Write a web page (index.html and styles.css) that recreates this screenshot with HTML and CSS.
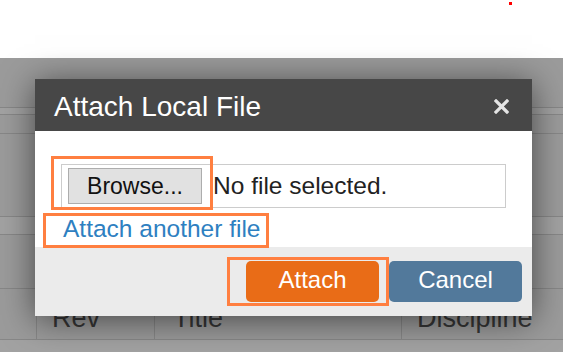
FILE: index.html
```html
<!DOCTYPE html>
<html lang="en">
<head>
    <meta charset="UTF-8">
    <meta name="viewport" content="width=device-width, initial-scale=1.0">
    <title>Attach Local File</title>
    <link rel="stylesheet" href="styles.css">
</head>
<body>
    <div class="topbar">
        <span class="status-dot"></span>
    </div>

    <div class="page">
        <div class="row row-tall"></div>
        <div class="row row-band row-thin"></div>
        <div class="row row-small"></div>
        <div class="row row-mid"></div>
        <div class="row row-band row-low"></div>
        <div class="row row-mid2"></div>
        <div class="row table-head">
            <div class="cell cell-check"></div>
            <div class="cell cell-rev">Rev</div>
            <div class="cell cell-title">Title</div>
            <div class="cell cell-disc">Discipline</div>
        </div>
        <div class="row row-band row-end"></div>
    </div>

    <div class="modal">
        <div class="modal-header">
            <h2>Attach Local File</h2>
            <button class="close" aria-label="Close">
                <svg width="15" height="15" viewBox="0 0 15 15">
                    <path d="M2 2 L13 13 M13 2 L2 13" stroke="#e4e4e4" stroke-width="3.2" stroke-linecap="square"/>
                </svg>
            </button>
        </div>
        <div class="modal-body">
            <div class="file-field">
                <span class="browse-btn">Browse...</span>
                <span class="file-name">No file selected.</span>
            </div>
            <a class="add-link" href="#">Attach another file</a>
        </div>
        <div class="modal-footer">
            <button class="btn btn-attach">Attach</button>
            <button class="btn btn-cancel">Cancel</button>
        </div>

        <span class="mark mark-browse"></span>
        <span class="mark mark-link"></span>
        <span class="mark mark-attach"></span>
    </div>
</body>
</html>
```

FILE: styles.css
```css
body {
    margin: 0;
    font-family: "Liberation Sans", Arial, sans-serif;
    background-color: #9b9b9b;
    overflow: hidden;
}
.topbar {
    height: 58px;
    background-color: #fff;
    position: relative;
}
.status-dot {
    position: absolute;
    left: 509px;
    top: 2px;
    width: 3px;
    height: 3px;
    background-color: #f00;
}
.page {
    background-color: #9b9b9b;
}
.row {
    border-bottom: 1px solid #878787;
    box-sizing: border-box;
}
.row-band {
    background-color: #a2a2a2;
}
.row-tall {
    height: 50px;
}
.row-thin {
    height: 7px;
}
.row-small {
    height: 19px;
}
.row-mid {
    height: 83px;
}
.row-low {
    height: 18px;
}
.row-mid2 {
    height: 54px;
}
.table-head {
    height: 51px;
    display: flex;
}
.row-end {
    height: 20px;
    border-bottom: none;
}
.cell {
    border-right: 1px solid #878787;
    padding: 14px 15px 0;
    font-size: 27px;
    color: #363636;
    box-sizing: border-box;
}
.cell-check {
    width: 37px;
    padding: 0;
}
.cell-rev {
    width: 118px;
}
.cell-title {
    width: 247px;
    padding-left: 18px;
}
.cell-disc {
    flex: 1;
    border-right: none;
}

.modal {
    position: absolute;
    left: 35px;
    top: 79px;
    width: 497px;
    box-shadow: 0 4px 32px rgba(0,0,0,0.55);
}
.modal-header {
    height: 52px;
    background-color: #474747;
    display: flex;
    align-items: center;
    justify-content: space-between;
    padding: 4px 23px 0 19px;
    box-sizing: border-box;
}
.modal-header h2 {
    margin: 0;
    font-size: 28px;
    font-weight: normal;
    color: #fff;
    line-height: 30px;
}
.close {
    background: none;
    border: none;
    padding: 0;
    width: 15px;
    height: 15px;
    margin-top: -2px;
    display: flex;
}
.modal-body {
    background-color: #fff;
    padding: 33px 26px 4px;
    height: 116px;
    box-sizing: border-box;
}
.file-field {
    display: flex;
    align-items: center;
    gap: 11px;
    border: 1px solid #ccc;
    padding: 3px 6px;
    height: 44px;
    box-sizing: border-box;
}
.browse-btn {
    width: 134px;
    height: 36px;
    box-sizing: border-box;
    background-color: #e1e1e1;
    border: 1px solid #adadad;
    font-size: 23px;
    color: #111;
    text-align: center;
    line-height: 34px;
}
.file-name {
    font-size: 24.5px;
    color: #222;
}
.add-link {
    display: block;
    margin: 7px 0 0 2px;
    font-size: 24.5px;
    line-height: 28px;
    color: #2e80c1;
    text-decoration: none;
}
.modal-footer {
    background-color: #ebebeb;
    height: 69px;
    display: flex;
    justify-content: flex-end;
    align-items: center;
    gap: 10px;
    padding: 0 10px;
    box-sizing: border-box;
}
.btn {
    width: 133px;
    height: 41px;
    border: none;
    border-radius: 5px;
    font-family: "Liberation Sans", Arial, sans-serif;
    font-size: 24px;
    color: #fff;
    padding: 0 0 4px;
}
.btn-attach {
    background-color: #e96c17;
}
.btn-cancel {
    background-color: #52799b;
}
.mark {
    position: absolute;
    border: 3px solid #ff7f40;
    box-sizing: border-box;
}
.mark-browse {
    left: 16px;
    top: 77px;
    width: 162px;
    height: 54px;
}
.mark-link {
    left: 8px;
    top: 134px;
    width: 226px;
    height: 35px;
}
.mark-attach {
    left: 192px;
    top: 178px;
    width: 162px;
    height: 49px;
}
```
